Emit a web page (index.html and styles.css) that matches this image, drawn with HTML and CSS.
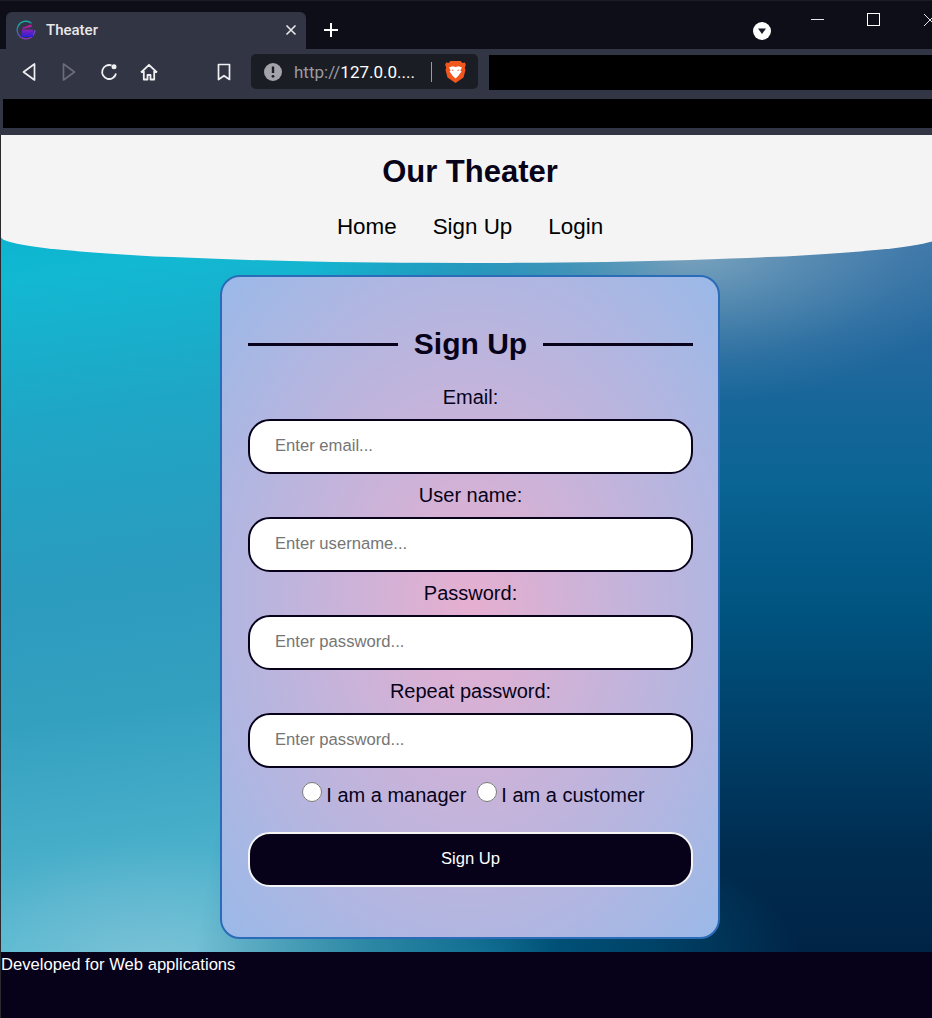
FILE: index.html
```html
<!DOCTYPE html>
<html lang="en">
<head>
<meta charset="utf-8">
<title>Theater</title>
<link rel="stylesheet" href="styles.css">
</head>
<body>
<div class="chrome">
  <div class="tabstrip">
    <div class="tab">
      <svg class="favicon" viewBox="0 0 20 20" width="20" height="20"><defs><linearGradient id="rg" x1="0.3" y1="0" x2="0.6" y2="1"><stop offset="0" stop-color="#12b8a8"/><stop offset="0.5" stop-color="#3a6ab8"/><stop offset="1" stop-color="#9a30c8"/></linearGradient><linearGradient id="cg" x1="0" y1="0" x2="0" y2="1"><stop offset="0" stop-color="#d0209a"/><stop offset="1" stop-color="#2420d8"/></linearGradient></defs><path d="M15.500 3.200A8.800 8.800 0 1 0 18.800 10" fill="none" stroke="url(#rg)" stroke-width="1.300"/><path d="M6 9.500h11V17H6zM6 8l9-3.500 1 2.200L7 9z" fill="url(#cg)"/></svg>
      <span class="tab-title">Theater</span>
      <svg class="tab-x" viewBox="0 0 12 12" width="12" height="12"><path d="M1.500 1.500l9 9M10.500 1.500l-9 9" stroke="#e8e8ea" stroke-width="1.600"/></svg>
    </div>
    <svg class="newtab" viewBox="0 0 16 16" width="16" height="16"><path d="M8 1v14M1 8h14" stroke="#fff" stroke-width="2"/></svg>
    <div class="strip-space"></div>
    <svg class="dropdown" viewBox="0 0 18 18" width="18" height="18"><circle cx="9" cy="9" r="9" fill="#fff"/><path d="M5 6.500h8L9 12z" fill="#1a1b26"/></svg>
    <div class="winbtns">
      <svg viewBox="0 0 14 14" width="14" height="14"><path d="M0 6.500h13" stroke="#e6e6e6"/></svg>
      <svg viewBox="0 0 14 14" width="14" height="14"><rect x="0.500" y="0.500" width="12" height="12" fill="none" stroke="#fff"/></svg>
      <svg viewBox="0 0 14 14" width="14" height="14"><path d="M1 1l12 12M13 1L1 13" stroke="#e6e6e6"/></svg>
    </div>
  </div>
  <div class="toolbar">
    <svg class="tool" viewBox="0 0 16 20" width="16" height="20"><path d="M13.500 2v16L2.500 10z" fill="none" stroke="#f0f0f2" stroke-width="1.700" stroke-linejoin="round"/></svg>
    <svg class="tool tool-fwd" viewBox="0 0 16 20" width="16" height="20"><path d="M2.500 2v16L13.500 10z" fill="none" stroke="#6a6c78" stroke-width="1.700" stroke-linejoin="round"/></svg>
    <svg class="tool tool-reload" viewBox="0 0 18 18" width="18" height="18"><path d="M16 10.500A7 7 0 1 1 11.500 2.400" fill="none" stroke="#f0f0f2" stroke-width="1.800"/><circle cx="14" cy="3.800" r="2.500" fill="#f0f0f2"/></svg>
    <svg class="tool tool-home" viewBox="0 0 18 18" width="18" height="18"><path d="M1 9.500L9 1.800l8 7.700M3.800 8v8.500h3.700V12h3v4.500h3.700V8" fill="none" stroke="#f0f0f2" stroke-width="1.800" stroke-linejoin="round"/></svg>
    <svg class="tool tool-mark" viewBox="0 0 14 18" width="14" height="18"><path d="M1.500 1.500h11v15L7 12.700 1.500 16.500z" fill="none" stroke="#f0f0f2" stroke-width="1.700" stroke-linejoin="round"/></svg>
    <div class="omnibox">
      <svg viewBox="0 0 18 18" width="18" height="18"><circle cx="9" cy="9" r="9" fill="#a3a4aa"/><path d="M9 3.500v6.500" stroke="#1c1e26" stroke-width="2.400"/><circle cx="9" cy="13.300" r="1.400" fill="#1c1e26"/></svg>
      <span class="url"><span class="url-scheme">http://</span>127.0.0....</span>
      <span class="omni-sep"></span>
      <svg viewBox="0 0 21 24" width="21" height="24"><path d="M5.500 1h10l2 2 2.300-.5 1 2-1 3.500.7 2-2 7.500-8 5.500-8-5.500L.5 10l.7-2-1-3.500 1-2L3.500 3z" fill="#f1561d"/><path d="M4 7.500l3.500-1.300 3 .8 3-.8L17 7.500l-1.700 3 1.200 1-3.300 4.500-2.700 2.500L7.800 16l-3.300-4.500 1.200-1z" fill="#fff"/><path d="M7 9.500l2 .8-1.500.7zM14 9.500l-2 .8 1.500.7z" fill="#f1561d"/></svg>
    </div>
    <div class="redact-url"></div>
  </div>
  <div class="bookmarks"><div class="redact-bar"></div></div>
</div>

<div class="page">
  <header class="site-header">
    <h1 class="site-title">Our Theater</h1>
    <nav class="site-nav">
      <a href="#">Home</a>
      <a href="#">Sign Up</a>
      <a href="#">Login</a>
    </nav>
  </header>
  <main class="stage">
    <form class="card">
      <h2 class="card-title"><span>Sign Up</span></h2>
      <label class="field-label" for="f1">Email:</label>
      <input class="field" id="f1" placeholder="Enter email...">
      <label class="field-label" for="f2">User name:</label>
      <input class="field" id="f2" placeholder="Enter username...">
      <label class="field-label" for="f3">Password:</label>
      <input class="field" id="f3" placeholder="Enter password...">
      <label class="field-label" for="f4">Repeat password:</label>
      <input class="field" id="f4" placeholder="Enter password...">
      <div class="roles">
        <input class="radio" type="radio" name="role" id="r1"><label for="r1">I am a manager</label>
        <input class="radio" type="radio" name="role" id="r2"><label for="r2">I am a customer</label>
      </div>
      <button class="submit" type="button">Sign Up</button>
    </form>
  </main>
  <footer class="site-footer">Developed for Web applications</footer>
</div>
</body>
</html>
```
FILE: styles.css
```css
* { box-sizing: border-box; }
html, body { margin: 0; padding: 0; }
body {
  width: 932px;
  height: 1018px;
  overflow: hidden;
  background: #2a2a2e;
  font-family: "Liberation Sans", Arial, sans-serif;
}
.chrome { height: 135px; background: #323543; display: flex; flex-direction: column; }
.tabstrip {
  height: 49px;
  flex: none;
  background: #0d0e17;
  border-top: 1px solid #1c1d22;
  display: flex;
  align-items: flex-end;
  padding-left: 6px;
}
.tab {
  width: 300px;
  height: 37px;
  background: #323543;
  border-radius: 6px 6px 0 0;
  display: flex;
  align-items: center;
  padding: 0 9px 2px 10px;
}
.tab-title {
  flex: 1;
  margin-left: 10px;
  font: 500 15px "Roboto", "Liberation Sans", sans-serif;
  color: #e8e8ea;
}
.newtab { margin: 0 0 11px 17px; flex: none; }
.strip-space { flex: 1; }
.dropdown { margin: 0 0 9px 0; flex: none; }
.winbtns { display: flex; gap: 42px; align-self: flex-start; margin: 12px 0 0 40px; width: 121px; flex: none; }
.winbtns svg { flex: none; }
.toolbar {
  height: 50px;
  flex: none;
  display: flex;
  align-items: center;
  padding: 0 0 5px 21px;
}
.tool { flex: none; }
.tool-fwd { margin-left: 24px; }
.tool-reload { margin-left: 23px; }
.tool-home { margin-left: 22px; }
.tool-mark { margin-left: 59px; }
.omnibox {
  width: 227px;
  height: 35px;
  margin-left: 20px;
  background: #1b1d25;
  border-radius: 5px;
  display: flex;
  align-items: center;
  padding-left: 13px;
  flex: none;
}
.url { margin-left: 12px; font: 17px "Roboto", "Liberation Sans", sans-serif; color: #fff; white-space: nowrap; width: 134px; }
.url-scheme { color: #9a9ba2; }
.omni-sep { width: 1px; height: 20px; background: #9a9ba2; margin: 0 13px 0 3px; }
.redact-url { flex: 1; height: 35px; margin: 2px 0 0 11px; background: #000; }
.bookmarks { height: 36px; padding: 0 0 0 3px; }
.redact-bar { height: 29px; background: #000; }

.page { width: 939px; height: 883px; padding-left: 1px; display: flex; flex-direction: column; }
.site-header {
  position: relative;
  z-index: 2;
  flex: none;
  height: 128px;
  background: #f4f4f4;
  border-radius: 0 0 50% 50% / 0 0 26px 26px;
  text-align: center;
  color: #07021a;
  padding-top: 18px;
  margin-bottom: -26px;
}
.site-title { margin: 0; font-size: 31px; line-height: 37px; font-weight: 700; }
.site-nav { display: flex; justify-content: center; gap: 36px; margin-top: 23px; }
.site-nav a { color: #000; font-size: 22.4px; line-height: 27px; text-decoration: none; }
.stage {
  position: relative;
  flex: 1;
  padding-top: 38px;
  display: flex;
  justify-content: center;
  background:
    radial-gradient(ellipse 300px 150px at 690px 15px, rgba(165,195,205,0.6) 0%, rgba(165,195,205,0.3) 40%, rgba(165,195,205,0.1) 72%, rgba(165,195,205,0) 100%),
    radial-gradient(ellipse 320px 130px at 480px 720px, rgba(0,95,135,0.95) 0%, rgba(0,95,135,0.5) 55%, rgba(0,95,135,0) 100%),
    linear-gradient(180deg, #3a74a8 0%, #23689e 14%, #0a6494 34%, #005480 52%, #003f68 70%, #002c50 86%, #002446 100%);
}
.stage::before {
  content: "";
  position: absolute;
  inset: 0;
  background:
    radial-gradient(ellipse 230px 130px at 150px 735px, rgba(150,195,215,0.65) 0%, rgba(150,195,215,0.32) 50%, rgba(150,195,215,0) 100%),
    linear-gradient(172deg, #0cb4cf 0%, #12b8d2 5%, #1fa6c6 22%, #2b9bbe 42%, #34a0c0 58%, #4db2cc 78%, #5accdd 100%);
  -webkit-mask-image: linear-gradient(100deg, #000 30%, transparent 64%);
  mask-image: linear-gradient(100deg, #000 30%, transparent 64%);
}
.card {
  position: relative;
  z-index: 1;
  width: 500px;
  height: 664px;
  border: 2px solid #2a6cb8;
  border-radius: 20px;
  background: radial-gradient(#e6afd0, #9ab9e8);
  padding: 45px 25px 0 26px;
  text-align: center;
  color: #07021a;
}
.card-title {
  display: flex;
  align-items: center;
  gap: 16px;
  margin: 0 0 19px;
  font-size: 30px;
  line-height: 44px;
  font-weight: 700;
}
.card-title::before, .card-title::after { content: ""; flex: 1; height: 3px; background: #07021a; }
.field-label { display: block; font-size: 20px; line-height: 24px; color: #07021a; }
.field {
  display: block;
  width: 445px;
  height: 55px;
  margin: 10px 0 9px;
  padding: 0 25px 2px;
  border: 2px solid #07021a;
  border-radius: 22px;
  background: #fff;
  font: 16.64px "Liberation Sans", Arial, sans-serif;
}
.field::placeholder { color: #757575; opacity: 1; }
.roles { display: flex; justify-content: center; align-items: flex-start; padding-left: 6px; font-size: 20px; line-height: 24px; margin-top: 15px; }
.radio { flex: none; width: 20px; height: 20px; margin: -1px 4px 0 0; appearance: auto; }
.roles label + .radio { margin-left: 11px; }
.submit {
  display: block;
  width: 445px;
  height: 55px;
  margin-top: 25px;
  padding-bottom: 3px;
  border: 2px solid #f4f4f4;
  border-radius: 22px;
  background: #07021a;
  color: #fff;
  font: 16.64px "Liberation Sans", Arial, sans-serif;
}
.site-footer { flex: none; height: 66px; background: #07021a; color: #fff; font-size: 16.64px; line-height: 26px; }
```
